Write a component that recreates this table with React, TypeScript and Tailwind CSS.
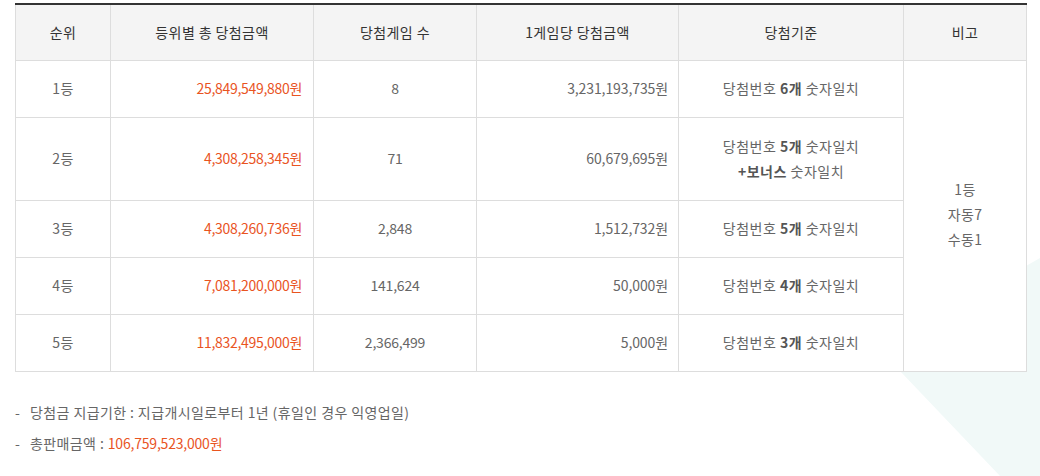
import React from 'react';

const FONT = '"Noto Sans CJK KR", "Noto Sans", sans-serif';

interface PrizeRow {
  rank: string;
  total: string;
  games: string;
  perGame: string;
  count: string;
  bonus?: boolean;
}

const rows: PrizeRow[] = [
  { rank: '1등', total: '25,849,549,880원', games: '8', perGame: '3,231,193,735원', count: '6개' },
  { rank: '2등', total: '4,308,258,345원', games: '71', perGame: '60,679,695원', count: '5개', bonus: true },
  { rank: '3등', total: '4,308,260,736원', games: '2,848', perGame: '1,512,732원', count: '5개' },
  { rank: '4등', total: '7,081,200,000원', games: '141,624', perGame: '50,000원', count: '4개' },
  { rank: '5등', total: '11,832,495,000원', games: '2,366,499', perGame: '5,000원', count: '3개' },
];

const headers = ['순위', '등위별 총 당첨금액', '당첨게임 수', '1게임당 당첨금액', '당첨기준', '비고'];

export default function App() {
  return (
    <div
      className="relative w-[1040px] h-[476px] overflow-hidden bg-white text-[14px] text-[#666]"
      style={{ fontFamily: FONT }}
    >
      {/* background decoration */}
      <svg className="absolute inset-0" width="1040" height="476" viewBox="0 0 1040 476">
        <polygon points="1040,258 880,350 1000,476 1040,476" fill="#f1f9f8" />
      </svg>

      <div className="relative px-[15px] pt-[3px]">
        <table className="w-[1011px] table-fixed border-collapse bg-white border-t-2 border-t-[#333]">
          <colgroup>
            <col className="w-[95px]" />
            <col className="w-[203px]" />
            <col className="w-[163px]" />
            <col className="w-[202px]" />
            <col className="w-[225px]" />
            <col className="w-[123px]" />
          </colgroup>
          <thead>
            <tr className="h-[56px] bg-[#f4f4f4]">
              {headers.map((h) => (
                <th
                  key={h}
                  className="border border-[#ddd] border-t-0 font-normal text-[#333] text-center leading-[25px] tracking-[0.4px]"
                >
                  {h}
                </th>
              ))}
            </tr>
          </thead>
          <tbody>
            {rows.map((r, i) => (
              <tr key={r.rank} className={r.bonus ? 'h-[83px]' : 'h-[57px]'}>
                <td className="border border-[#ddd] text-center leading-[25px] tracking-[0.5px]">{r.rank}</td>
                <td className="border border-[#ddd] text-right pr-[11px] leading-[25px] text-[#e9541f] tracking-[-0.3px]">
                  {r.total}
                </td>
                <td className="border border-[#ddd] text-center leading-[25px] tracking-[-0.2px]">{r.games}</td>
                <td className="border border-[#ddd] text-right pr-[10px] leading-[25px] tracking-[-0.1px]">
                  {r.perGame}
                </td>
                <td className="border border-[#ddd] text-center leading-[25px] tracking-[0.5px]">
                  당첨번호 <b className="font-bold text-[#555]">{r.count}</b> 숫자일치
                  {r.bonus && (
                    <>
                      <br />
                      <b className="font-bold text-[#555]">+보너스</b> 숫자일치
                    </>
                  )}
                </td>
                {i === 0 && (
                  <td rowSpan={5} className="border border-[#ddd] text-center leading-[25px] pb-[2px] tracking-[0.4px]">
                    1등
                    <br />
                    자동7
                    <br />
                    수동1
                  </td>
                )}
              </tr>
            ))}
          </tbody>
        </table>

        <ul className="mt-[28px] flex flex-col gap-[6px] leading-[25px] tracking-[0.4px]">
          <li className="flex">
            <span className="w-[15px]">-</span>
            <span>당첨금 지급기한 : 지급개시일로부터 1년 (휴일인 경우 익영업일)</span>
          </li>
          <li className="flex">
            <span className="w-[15px]">-</span>
            <span>
              총판매금액 : <span className="text-[#e9541f] tracking-[-0.2px]">106,759,523,000원</span>
            </span>
          </li>
        </ul>
      </div>
    </div>
  );
}
